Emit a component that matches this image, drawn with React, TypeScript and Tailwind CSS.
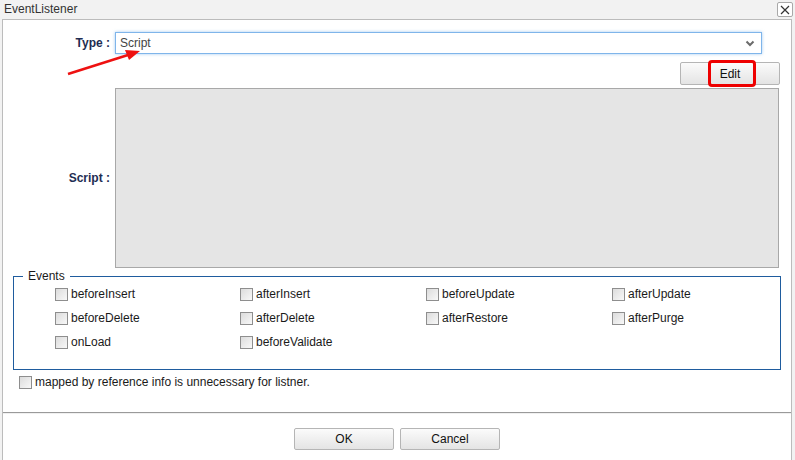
import React from "react";

const events = [
  "beforeInsert",
  "afterInsert",
  "beforeUpdate",
  "afterUpdate",
  "beforeDelete",
  "afterDelete",
  "afterRestore",
  "afterPurge",
  "onLoad",
  "beforeValidate",
];

function Check({ label }: { label: string }) {
  return (
    <label className="flex items-center gap-[3px] h-[14px]">
      <span className="block w-[13px] h-[13px] border border-[#8e8e8e] bg-gradient-to-br from-[#dcdcdc] to-[#f8f8f8]" />
      <span className="text-[12px] leading-[14px] text-[#1a1a1a]">{label}</span>
    </label>
  );
}

function GrayButton({ children, className = "" }: { children: React.ReactNode; className?: string }) {
  return (
    <button
      className={
        "block h-[22px] w-[100px] rounded-[2px] border border-[#b5b5b5] bg-gradient-to-b from-[#fbfbfb] to-[#e4e4e4] text-[12px] text-[#111] " +
        className
      }
    >
      {children}
    </button>
  );
}

export default function App() {
  return (
    <div
      className="relative w-[795px] h-[460px] overflow-hidden bg-[#f2f2f2] flex flex-col"
      style={{ fontFamily: '"Liberation Sans", Arial, sans-serif' }}
    >
      {/* title bar */}
      <div className="h-[19px] flex items-start justify-between pl-[4px] pr-[2px]">
        <span className="text-[12px] leading-[14px] mt-[2px] text-[#333]">EventListener</span>
        <button className="mt-[2px] w-[16px] h-[15px] rounded-[2px] border border-[#a9a9a9] bg-white flex items-center justify-center">
          <svg width="10" height="10" viewBox="0 0 10 10">
            <path d="M1 1L9 9M9 1L1 9" stroke="#333" strokeWidth="1.2" />
          </svg>
        </button>
      </div>

      {/* panel */}
      <div className="flex-1 ml-[2px] w-[790px] border-l border-t border-r border-[#bcbcbc] bg-white flex flex-col">
        <div className="flex items-center mt-[12px]">
          <div className="w-[107px] text-right text-[12px] font-bold text-[#1e2d52]">Type :</div>
          <div className="ml-[5px] w-[647px] h-[22px] border border-[#7fb5ea] shadow-[0_0_3px_rgba(90,160,230,0.55)] flex items-center justify-between pl-[4px] pr-[6px]">
            <span className="text-[12px] text-[#444]">Script</span>
            <svg width="10" height="7" viewBox="0 0 10 7">
              <path d="M1.5 1.5L5 5L8.5 1.5" fill="none" stroke="#6b6b6b" strokeWidth="2" />
            </svg>
          </div>
        </div>

        <div className="flex justify-end mt-[8px] pr-[11px]">
          <div className="relative flex">
            <GrayButton className="h-[23px]">Edit</GrayButton>
            <div className="absolute left-[28px] top-[-2px] w-[48px] h-[27px] rounded-[4px] border-[3px] border-[#ee0000]" />
          </div>
        </div>

        <div className="flex items-center mt-[3px]">
          <div className="w-[107px] text-right text-[12px] font-bold text-[#1e2d52]">Script :</div>
          <div className="ml-[5px] w-[664px] h-[180px] border border-[#a8a8a8] bg-[#e5e5e5]" />
        </div>

        <fieldset className="ml-[10px] mt-[1px] w-[768px] h-[101px] border border-[#1f5c9e]">
          <legend className="ml-[9px] px-[5px] text-[12px] leading-[14px] text-[#1a1a1a]">Events</legend>
          <div className="grid grid-cols-[185px_186px_186px_140px] gap-y-[10px] mt-[4px] pl-[41px]">
            {events.map((e) => (
              <Check key={e} label={e} />
            ))}
          </div>
        </fieldset>

        <div className="ml-[16px] mt-[5px]">
          <Check label="mapped by reference info is unnecessary for listner." />
        </div>

        <div className="mt-[23px] h-[2px] border-t border-[#9a9a9a] bg-[#f0f0f0]" />

        <div className="flex justify-center gap-[6px] mt-[14px]">
          <GrayButton>OK</GrayButton>
          <GrayButton>Cancel</GrayButton>
        </div>
      </div>

      {/* red annotation arrow */}
      <svg className="absolute left-0 top-0 pointer-events-none" width="795" height="460">
        <line x1="68" y1="74" x2="128" y2="55" stroke="#ee1111" strokeWidth="2.5" />
        <polygon points="140,51 125,50 129,60" fill="#ee1111" />
      </svg>
    </div>
  );
}
